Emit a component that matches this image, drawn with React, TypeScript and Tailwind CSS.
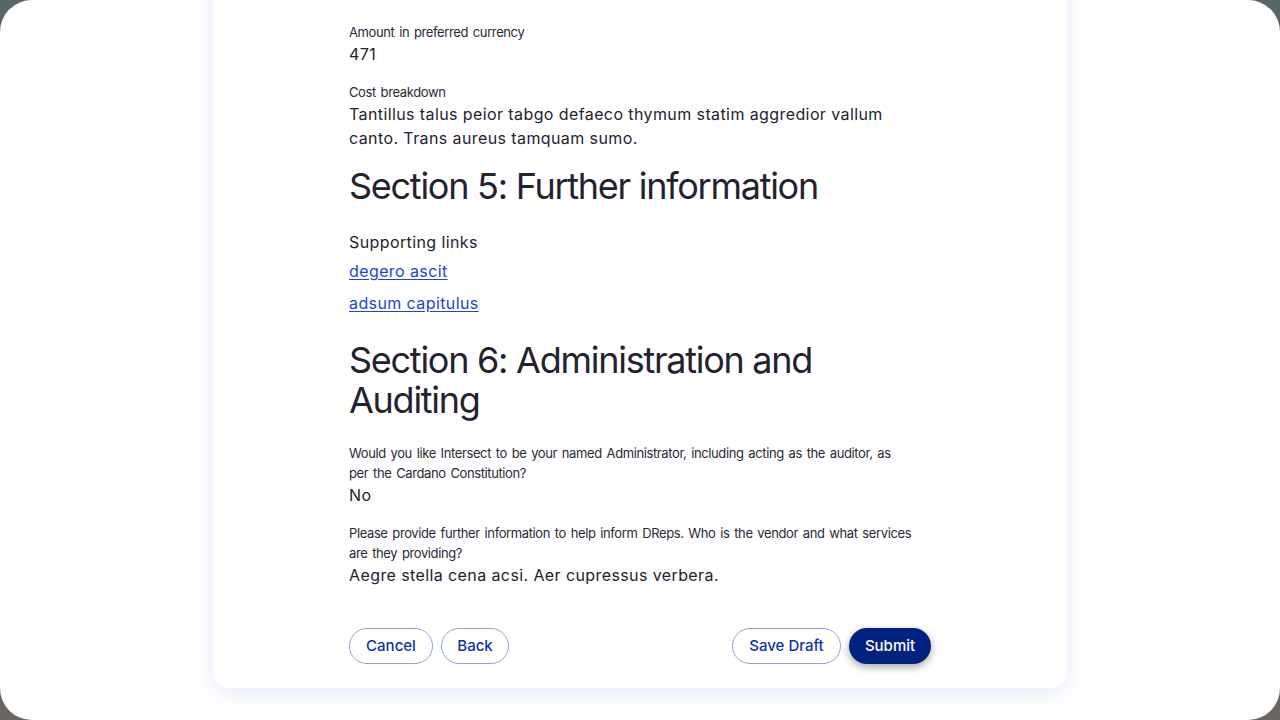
import React from 'react';

const font = { fontFamily: 'Inter, "Open Sans", sans-serif' };

function Field({ label, value }: { label: string; value: string }) {
  return (
    <div>
      <p className="max-w-[565px] text-[13px] leading-5 tracking-[-0.03em] [word-spacing:1.5px] text-[#2a2937]">{label}</p>
      <p className="text-base leading-6 tracking-[0.025em] text-[#24222f]">{value}</p>
    </div>
  );
}

function OutlineButton({ children, width }: { children: React.ReactNode; width: string }) {
  return (
    <button
      className={`${width} h-9 rounded-full border border-[#8fa2e0] bg-white text-[15px] font-medium text-[#0a34a8]`}
    >
      {children}
    </button>
  );
}

export default function App() {
  return (
    <div className="h-screen w-screen bg-gradient-to-b from-[#56666b] to-[#6c6662]" style={font}>
      <div className="flex h-full flex-col items-center justify-end overflow-hidden rounded-[32px] bg-white pb-8">
        <div className="w-[854px] shrink-0 rounded-2xl bg-white px-[136px] pb-6 pt-[80px] shadow-[0_4px_22px_rgba(90,110,230,0.16)]">
          {/* cost section */}
          <Field label="Amount in preferred currency" value="471" />
          <div className="mt-4">
            <Field
              label="Cost breakdown"
              value="Tantillus talus peior tabgo defaeco thymum statim aggredior vallum canto. Trans aureus tamquam sumo."
            />
          </div>

          {/* Section 5 */}
          <h2 className="mt-4 text-4xl leading-10 font-normal tracking-[-0.035em] text-[#24222f]">
            Section 5: Further information
          </h2>
          <p className="mt-6 text-base leading-6 tracking-[0.025em] text-[#24222f]">Supporting links</p>
          <div className="mt-[5px] flex flex-col gap-2">
            <a href="#" className="w-fit text-base leading-6 tracking-[0.025em] text-[#1c45d1] underline underline-offset-2">
              degero ascit
            </a>
            <a href="#" className="w-fit text-base leading-6 tracking-[0.025em] text-[#1c45d1] underline underline-offset-2">
              adsum capitulus
            </a>
          </div>

          {/* Section 6 */}
          <h2 className="mt-[25px] text-4xl leading-10 font-normal tracking-[-0.035em] text-[#24222f]">
            Section 6: Administration and Auditing
          </h2>
          <div className="mt-[23px]">
            <Field
              label="Would you like Intersect to be your named Administrator, including acting as the auditor, as per the Cardano Constitution?"
              value="No"
            />
          </div>
          <div className="mt-4">
            <Field
              label="Please provide further information to help inform DReps. Who is the vendor and what services are they providing?"
              value="Aegre stella cena acsi. Aer cupressus verbera."
            />
          </div>

          {/* actions */}
          <div className="mt-[41px] flex items-center justify-between">
            <div className="flex gap-2">
              <OutlineButton width="w-[84px]">Cancel</OutlineButton>
              <OutlineButton width="w-[68px]">Back</OutlineButton>
            </div>
            <div className="flex gap-2">
              <OutlineButton width="w-[109px]">Save Draft</OutlineButton>
              <button className="h-9 w-[82px] rounded-full bg-[#01237f] text-[15px] font-medium text-white shadow-[0_3px_8px_rgba(0,0,0,0.35)]">
                Submit
              </button>
            </div>
          </div>
        </div>
      </div>
    </div>
  );
}
